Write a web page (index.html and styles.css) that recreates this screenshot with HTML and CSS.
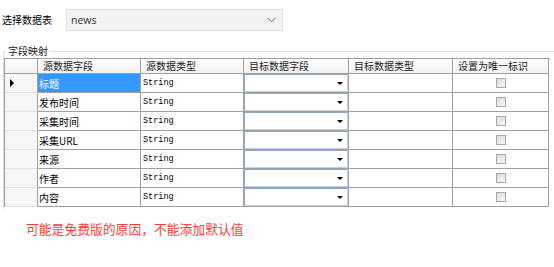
FILE: index.html
```html
<!DOCTYPE html>
<html lang="zh">
<head>
<meta charset="utf-8">
<link rel="stylesheet" href="styles.css">
</head>
<body>
<div class="top">
  <span class="label">选择数据表</span>
  <div class="select">
    <span class="select-text">news</span>
    <svg class="chev" width="9" height="6" viewBox="0 0 9 6"><path d="M0.5 0.8 L4.5 4.8 L8.5 0.8" fill="none" stroke="#666" stroke-width="1"/></svg>
  </div>
</div>
<fieldset class="group">
  <legend class="legend">字段映射</legend>
  <div class="grid">
    <div class="hc rh"></div>
    <div class="hc">源数据字段</div>
    <div class="hc">源数据类型</div>
    <div class="hc">目标数据字段</div>
    <div class="hc">目标数据类型</div>
    <div class="hc">设置为唯一标识</div>

    <div class="rhc"><span class="cur"></span></div>
    <div class="c cn sel">标题</div>
    <div class="c mono">String</div>
    <div class="c cb"><div class="combo"><span class="tri"></span></div></div>
    <div class="c"></div>
    <div class="c chk"><span class="box"></span></div>

    <div class="rhc"></div>
    <div class="c cn">发布时间</div>
    <div class="c mono">String</div>
    <div class="c cb"><div class="combo"><span class="tri"></span></div></div>
    <div class="c"></div>
    <div class="c chk"><span class="box"></span></div>

    <div class="rhc"></div>
    <div class="c cn">采集时间</div>
    <div class="c mono">String</div>
    <div class="c cb"><div class="combo"><span class="tri"></span></div></div>
    <div class="c"></div>
    <div class="c chk"><span class="box"></span></div>

    <div class="rhc"></div>
    <div class="c cn">采集URL</div>
    <div class="c mono">String</div>
    <div class="c cb"><div class="combo"><span class="tri"></span></div></div>
    <div class="c"></div>
    <div class="c chk"><span class="box"></span></div>

    <div class="rhc"></div>
    <div class="c cn">来源</div>
    <div class="c mono">String</div>
    <div class="c cb"><div class="combo"><span class="tri"></span></div></div>
    <div class="c"></div>
    <div class="c chk"><span class="box"></span></div>

    <div class="rhc"></div>
    <div class="c cn">作者</div>
    <div class="c mono">String</div>
    <div class="c cb"><div class="combo"><span class="tri"></span></div></div>
    <div class="c"></div>
    <div class="c chk"><span class="box"></span></div>

    <div class="rhc"></div>
    <div class="c cn">内容</div>
    <div class="c mono">String</div>
    <div class="c cb"><div class="combo"><span class="tri"></span></div></div>
    <div class="c"></div>
    <div class="c chk"><span class="box"></span></div>
  </div>
</fieldset>
<p class="note">可能是免费版的原因，不能添加默认值</p>
</body>
</html>
```

FILE: styles.css
```css
html, body {
  margin: 0;
  padding: 0;
  background: #fff;
  overflow: hidden;
  font-family: "Noto Sans CJK SC", "Noto Sans", sans-serif;
  color: #000;
}

.top {
  display: flex;
  align-items: center;
  padding: 9px 0 0 2px;
  height: 22px;
}

.label {
  font-size: 10px;
  line-height: 12px;
  width: 64px;
}

.select {
  box-sizing: border-box;
  width: 217px;
  height: 22px;
  background: #f2f2f2;
  border: 1px solid #e0e0e0;
  display: flex;
  align-items: center;
  justify-content: space-between;
  padding: 0 6px 0 4px;
}

.select-text {
  font-family: "Open Sans", "Noto Sans", sans-serif;
  font-size: 10.5px;
  color: #333;
}

.chev {
  display: block;
}

.group {
  margin: 14px -20px 0 3px;
  padding: 1px 0 2px 0;
  border: 1px solid #dcdcdc;
  border-bottom: none;
  min-width: 0;
}

.legend {
  font-size: 10px;
  line-height: 12px;
  padding: 0 2px;
  margin-left: 2px;
  color: #222;
}

.grid {
  display: grid;
  grid-template-columns: 33px 103px 103px 105px 104px 96px;
  grid-template-rows: 15px repeat(7, 19px);
  width: 545px;
  border-top: 1px solid #a0a0a0;
  border-left: 1px solid #a0a0a0;
}

.grid > div {
  box-sizing: border-box;
  border-right: 1px solid #a0a0a0;
  border-bottom: 1px solid #a0a0a0;
}

.hc {
  background: linear-gradient(#ffffff, #f1f1f1);
  font-size: 10px;
  line-height: 14px;
  padding-left: 5px;
  color: #222;
  white-space: nowrap;
}

.hc.rh {
  padding: 0;
}

.rhc {
  background: #f7f7f7;
  border-bottom-color: #e2e2e2 !important;
  display: flex;
  align-items: center;
  padding-left: 5px;
}

.cur {
  width: 0;
  height: 0;
  border-top: 4px solid transparent;
  border-bottom: 4px solid transparent;
  border-left: 4px solid #000;
}

.c {
  background: #fff;
  display: flex;
  align-items: center;
  white-space: nowrap;
}

.cn {
  font-size: 10px;
  padding-left: 1px;
}

.sel {
  background: #3399ff;
  color: #fff;
}

.mono {
  font-family: "Liberation Mono", monospace;
  font-size: 8.5px;
  padding-left: 2px;
}

.cb {
  padding: 0;
}

.combo {
  box-sizing: border-box;
  width: 104px;
  height: 18px;
  border: 1px solid #c3d1e2;
  border-left-color: #8ea8c6;
  border-top-color: #8ea8c6;
  display: flex;
  align-items: center;
  justify-content: flex-end;
  padding-right: 4px;
  background: #fff;
}

.tri {
  width: 0;
  height: 0;
  border-left: 3px solid transparent;
  border-right: 3px solid transparent;
  border-top: 3px solid #000;
}

.chk {
  justify-content: center;
}

.box {
  box-sizing: border-box;
  width: 10px;
  height: 10px;
  border: 1px solid #a8a8a8;
  background: linear-gradient(135deg, #dcdcdc, #f6f6f6);
}

.note {
  margin: 12px 0 0 26px;
  font-size: 12.8px;
  line-height: 16px;
  color: #ff3a3a;
}
```
